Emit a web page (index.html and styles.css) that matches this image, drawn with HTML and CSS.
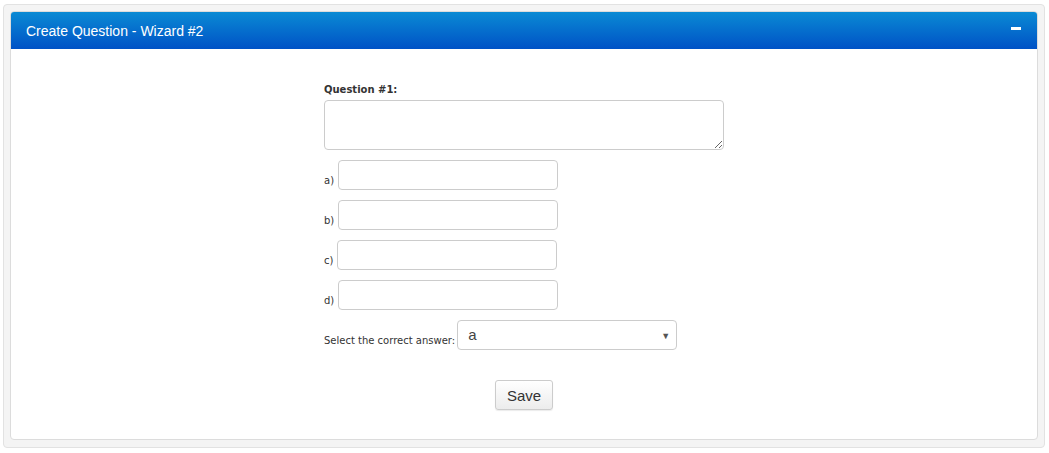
FILE: index.html
```html
<!DOCTYPE html>
<html>
<head>
<meta charset="utf-8">
<link rel="stylesheet" href="styles.css">
</head>
<body>
<div class="outer">
  <div class="panel">
    <div class="panel-head">
      <span class="title">Create Question - Wizard #2</span>
      <span class="minus"></span>
    </div>
    <div class="panel-body">
      <form class="form">
        <label class="qlabel">Question #1:</label>
        <textarea class="qtext"></textarea>
        <div class="row"><span class="opt">a)</span><input class="inp" type="text"></div>
        <div class="row"><span class="opt">b)</span><input class="inp" type="text"></div>
        <div class="row"><span class="opt">c)</span><input class="inp" type="text"></div>
        <div class="row"><span class="opt">d)</span><input class="inp" type="text"></div>
        <div class="row"><span class="opt">Select the correct answer:</span>
          <div class="select"><span>a</span><span class="caret">▼</span></div>
        </div>
        <div class="actions"><button type="button" class="btn">Save</button></div>
      </form>
    </div>
  </div>
</div>
</body>
</html>
```
FILE: styles.css
```css
html, body { margin: 0; padding: 0; background: #fff; }
body { padding: 4px 4px 6px 3px; font-family: "DejaVu Sans", Verdana, sans-serif; }
.outer {
  background: #f4f4f4;
  border: 1px solid #e2e2e2;
  border-radius: 4px;
  padding: 6px 6px 7px 6px;
}
.panel {
  border: 1px solid #dcdcdc;
  border-radius: 4px;
  background: #fff;
  overflow: hidden;
}
.panel-head {
  height: 37px;
  background: linear-gradient(#0a8ad4, #0052c6);
  display: flex;
  align-items: center;
  justify-content: space-between;
  padding: 0 16px 0 15px;
  color: #fff;
}
.title { font-family: "Liberation Sans", Arial, sans-serif; font-size: 14px; }
.minus { width: 10px; height: 3px; background: #fff; margin-top: -4px; }
.panel-body { height: 390px; display: flex; justify-content: center; }
.form { width: 400px; margin-top: 35px; display: flex; flex-direction: column; }
.qlabel { font-size: 10px; font-weight: bold; color: #333; line-height: 12px; }
.qtext {
  width: 400px; height: 50px; box-sizing: border-box;
  margin: 4px 0 0 0;
  border: 1px solid #ccc; border-radius: 4px; resize: vertical;
}
.row { display: flex; align-items: flex-end; margin-top: 10px; }
.opt { font-size: 10px; color: #333; margin-right: 4px; line-height: 12px; padding-bottom: 3px; }
.inp {
  width: 220px; height: 30px; box-sizing: border-box; margin: 0;
  border: 1px solid #ccc; border-radius: 4px; background: #fff;
}
.select {
  width: 220px; height: 30px; box-sizing: border-box; margin-left: -2px;
  border: 1px solid #ccc; border-radius: 4px; background: #fff;
  display: flex; justify-content: space-between; align-items: flex-start;
  padding: 5px 6px 0 10px;
  font-family: "Liberation Sans", Arial, sans-serif; font-size: 15px; color: #444;
}
.caret { font-size: 9px; color: #555; margin-top: 5px; }
.actions { display: flex; justify-content: center; margin-top: 30px; }
.btn {
  width: 58px; height: 30px; box-sizing: border-box;
  border: 1px solid #ccc; border-radius: 3px;
  background: linear-gradient(#fff, #ececec);
  font-family: "Liberation Sans", Arial, sans-serif; font-size: 15px; color: #333;
  box-shadow: 0 1px 1px rgba(0,0,0,0.08);
}
```
